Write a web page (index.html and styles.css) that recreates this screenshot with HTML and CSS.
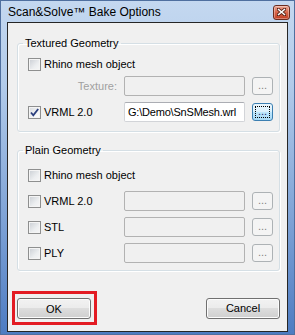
FILE: index.html
```html
<!DOCTYPE html>
<html lang="en">
<head>
    <meta charset="UTF-8">
    <title>Scan&amp;Solve Bake Options</title>
    <link rel="stylesheet" href="styles.css">
</head>
<body>
    <div class="window">
        <div class="titlebar">
            <span class="title">Scan&amp;Solve™ Bake Options</span>
            <span class="close">
                <svg width="9" height="8" viewBox="0 0 9 8">
                    <path d="M1 1 L8 7 M8 1 L1 7" stroke="#5a2418" stroke-width="3.2" stroke-linecap="square"/>
                    <path d="M1 1 L8 7 M8 1 L1 7" stroke="#fff" stroke-width="1.6"/>
                </svg>
            </span>
        </div>

        <div class="client">
            <fieldset class="group textured">
                <legend>Textured Geometry</legend>
                <div class="row">
                    <label class="check wide"><span class="box"></span>Rhino mesh object</label>
                </div>
                <div class="row tight">
                    <span class="field-label">Texture:</span>
                    <input type="text" class="field" disabled>
                    <button class="browse" disabled>...</button>
                </div>
                <div class="row">
                    <label class="check"><span class="box checked">
                        <svg width="11" height="11" viewBox="0 0 11 11">
                            <path d="M2 5.5 L4.3 8.3 L9.2 2" fill="none" stroke="#2b3f7e" stroke-width="1.8"/>
                        </svg>
                    </span>VRML 2.0</label>
                    <input type="text" class="field" value="G:\Demo\SnSMesh.wrl">
                    <button class="browse focused">...</button>
                </div>
            </fieldset>

            <fieldset class="group plain">
                <legend>Plain Geometry</legend>
                <div class="row">
                    <label class="check wide"><span class="box"></span>Rhino mesh object</label>
                </div>
                <div class="row">
                    <label class="check"><span class="box"></span>VRML 2.0</label>
                    <input type="text" class="field" disabled>
                    <button class="browse" disabled>...</button>
                </div>
                <div class="row">
                    <label class="check"><span class="box"></span>STL</label>
                    <input type="text" class="field" disabled>
                    <button class="browse" disabled>...</button>
                </div>
                <div class="row">
                    <label class="check"><span class="box"></span>PLY</label>
                    <input type="text" class="field" disabled>
                    <button class="browse" disabled>...</button>
                </div>
            </fieldset>

            <div class="actions">
                <div class="highlight">
                    <button class="btn">OK</button>
                </div>
                <button class="btn">Cancel</button>
            </div>
        </div>
    </div>
</body>
</html>
```

FILE: styles.css
```css
body {
    margin: 0;
    font-family: "Liberation Sans", Arial, sans-serif;
    font-size: 11px;
    color: #000;
}
.window {
    width: 295px;
    height: 335px;
    box-sizing: border-box;
    border: 1px solid #4f6f9f;
    background: linear-gradient(#c4d8f0, #b2cbea 25%, #7fa3d6 65%, #4e7cc2);
    display: flex;
    flex-direction: column;
}
.titlebar {
    height: 21px;
    display: flex;
    align-items: center;
    justify-content: space-between;
    padding: 0 4px 0 7px;
}
.title {
    font-size: 12px;
}
.close {
    width: 15px;
    height: 13px;
    margin-top: 1px;
    border: 1px solid #6b2c1f;
    border-radius: 3px;
    background: linear-gradient(#eba592, #d7654a 50%, #c13d22);
    box-shadow: inset 0 0 0 1px rgba(255, 255, 255, 0.35);
    display: flex;
    align-items: center;
    justify-content: center;
}
.client {
    flex: 1;
    margin: 0 6px 2px;
    border: 1px solid #262626;
    background: #f0f0f0;
    padding-top: 14px;
    display: flex;
    flex-direction: column;
}

/* group boxes */
.group {
    margin: 0 7px 0 9px;
    padding: 4px 6px 9px 10px;
    border: 1px solid #d5dfe5;
    border-radius: 3px;
    box-shadow: inset 1px 1px 0 #fff, 1px 1px 0 #fff;
    min-width: 0;
}
.group legend {
    margin-left: -5px;
    padding: 0 2px;
    font-size: 11px;
    line-height: 13px;
}
.plain {
    margin-top: 12px;
    padding-top: 8px;
    padding-bottom: 7px;
}
.row {
    display: grid;
    grid-template-columns: 89px 121px 21px;
    column-gap: 7px;
    align-items: center;
    height: 20px;
    margin-top: 6px;
}
.row:first-of-type {
    margin-top: 0;
}
.row.tight {
    margin-top: 2px;
}

/* checkboxes */
.check {
    display: flex;
    align-items: center;
    white-space: nowrap;
}
.check.wide {
    grid-column: 1 / -1;
}
.box {
    flex: none;
    width: 13px;
    height: 13px;
    box-sizing: border-box;
    margin-right: 3px;
    border: 1px solid #8e8f8f;
    background: linear-gradient(135deg, #c9cdd3, #eceef0 60%, #f7f7f7);
    box-shadow: inset 0 0 0 1px #f4f4f4;
    display: flex;
    align-items: center;
    justify-content: center;
}
.box.checked {
    background: linear-gradient(135deg, #d6d9de, #f4f5f6 60%, #fff);
}

/* fields */
.field-label {
    text-align: right;
    color: #a0a0a0;
}
.field {
    height: 20px;
    width: 121px;
    box-sizing: border-box;
    margin: 0;
    padding: 0 0 0 3px;
    border: 1px solid #d2d4d8;
    border-top-color: #abadb3;
    border-radius: 2px;
    font-family: "Liberation Sans", Arial, sans-serif;
    font-size: 11px;
    letter-spacing: -0.2px;
    color: #000;
    background: #fff;
}
.field:disabled {
    background: #f0f0f0;
    border-color: #b2b2b2;
}
.browse {
    width: 21px;
    height: 18px;
    margin: 0;
    padding: 0 0 3px;
    border: 1px solid #adb2b5;
    border-radius: 3px;
    background: #f4f4f4;
    color: #838383;
    font-family: "Liberation Sans", Arial, sans-serif;
    font-size: 11px;
    line-height: 12px;
}
.browse.focused {
    border-color: #3c7fb1;
    background: linear-gradient(#eaf6fd, #d9f0fc 50%, #bee6fd 50%, #a7d9f5);
    color: #1b2a6b;
    outline: 1px dotted #000;
    outline-offset: -4px;
}

/* bottom buttons */
.actions {
    display: flex;
    justify-content: space-between;
    align-items: center;
    margin: 20px 7px 0 4px;
}
.highlight {
    border: 3px solid #e31b23;
    padding: 4px 3px 3px 2px;
}
.btn {
    width: 74px;
    height: 21px;
    margin: 0;
    padding: 0;
    border: 1px solid #707070;
    border-radius: 3px;
    background: linear-gradient(#f2f2f2, #ebebeb 50%, #dddddd 50%, #cfcfcf);
    box-shadow: inset 0 0 0 1px #fcfcfc;
    font-family: "Liberation Sans", Arial, sans-serif;
    font-size: 11px;
    color: #000;
}
```
